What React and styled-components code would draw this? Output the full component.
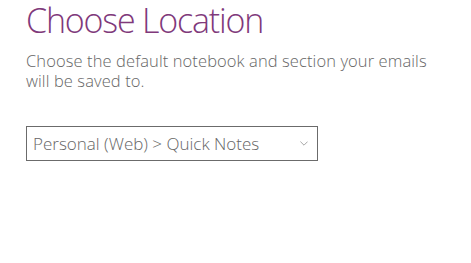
import React from "react";
import styled, { createGlobalStyle } from "styled-components";

const GlobalStyle = createGlobalStyle`
  body {
    margin: 0;
    background: #ffffff;
    font-family: "Open Sans", "Noto Sans", sans-serif;
  }
`;

const Page = styled.div`
  padding: 0 0 0 26px;
  width: 471px;
  height: 263px;
  box-sizing: border-box;
`;

const Title = styled.h1`
  margin: 0;
  font-size: 34px;
  line-height: 40px;
  font-weight: 300;
  color: #80397b;
  letter-spacing: -1.2px;
  white-space: nowrap;
`;

const Lead = styled.p`
  margin: 11px 0 0;
  width: 415px;
  font-size: 16.5px;
  line-height: 20px;
  font-weight: 300;
  color: #666666;
  letter-spacing: 0.1px;
`;

const Select = styled.div`
  margin-top: 35px;
  width: 292px;
  height: 35px;
  box-sizing: border-box;
  border: 1px solid #6b6b6b;
  display: flex;
  align-items: center;
  justify-content: space-between;
  padding: 0 9px 0 6px;
`;

const SelectText = styled.span`
  font-size: 17px;
  font-weight: 300;
  color: #666666;
`;

const Chevron = () => (
  <svg width="8" height="5" viewBox="0 0 8 5" fill="none">
    <path d="M0.4 0.6 L4 4.2 L7.6 0.6" stroke="#a6a6a6" strokeWidth="1" />
  </svg>
);

export default function App() {
  return (
    <Page>
      <GlobalStyle />
      <Title>Choose Location</Title>
      <Lead>Choose the default notebook and section your emails will be saved to.</Lead>
      <Select>
        <SelectText>Personal (Web) &gt; Quick Notes</SelectText>
        <Chevron />
      </Select>
    </Page>
  );
}
